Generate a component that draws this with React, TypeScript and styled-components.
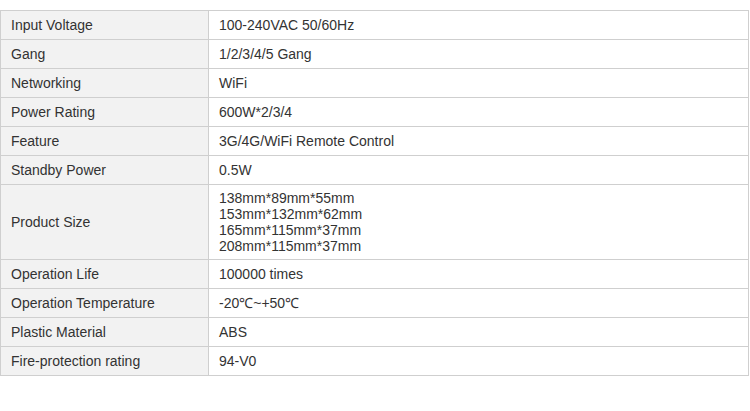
import React from "react";
import styled, { createGlobalStyle } from "styled-components";

const specs: { label: string; value: string[] }[] = [
  { label: "Input Voltage", value: ["100-240VAC 50/60Hz"] },
  { label: "Gang", value: ["1/2/3/4/5 Gang"] },
  { label: "Networking", value: ["WiFi"] },
  { label: "Power Rating", value: ["600W*2/3/4"] },
  { label: "Feature", value: ["3G/4G/WiFi Remote Control"] },
  { label: "Standby Power", value: ["0.5W"] },
  {
    label: "Product Size",
    value: [
      "138mm*89mm*55mm",
      "153mm*132mm*62mm",
      "165mm*115mm*37mm",
      "208mm*115mm*37mm",
    ],
  },
  { label: "Operation Life", value: ["100000 times"] },
  { label: "Operation Temperature", value: ["-20\u2103~+50\u2103"] },
  { label: "Plastic Material", value: ["ABS"] },
  { label: "Fire-protection rating", value: ["94-V0"] },
];

export default function App() {
  return (
    <>
      <GlobalStyle />
      <Page>
        <SpecTable>
          <tbody>
            {specs.map((s) => {
              const multi = s.value.length > 1;
              return (
                <tr key={s.label}>
                  <LabelCell $multi={multi}>{s.label}</LabelCell>
                  <ValueCell $multi={multi}>
                    {s.value.map((line) => (
                      <Line key={line}>{line}</Line>
                    ))}
                  </ValueCell>
                </tr>
              );
            })}
          </tbody>
        </SpecTable>
      </Page>
    </>
  );
}

const GlobalStyle = createGlobalStyle`
  body {
    margin: 0;
    background: #fff;
    font-family: "Liberation Sans", Arial, sans-serif;
  }
`;

const Page = styled.div`
  padding-top: 10px;
`;

const SpecTable = styled.table`
  width: 749px;
  border-collapse: collapse;
  table-layout: fixed;
  font-size: 14px;
  color: #333;
`;

const Cell = styled.td<{ $multi?: boolean }>`
  border: 1px solid #cfcfcf;
  padding: ${(p) => (p.$multi ? "5px 10px 5px" : "6px 10px")};
  line-height: 16px;
  vertical-align: middle;
  text-align: left;
`;

const LabelCell = styled(Cell)`
  width: 187px;
  background: #f2f2f2;
`;

const ValueCell = styled(Cell)`
  background: #fff;
`;

const Line = styled.div`
  white-space: nowrap;
`;
